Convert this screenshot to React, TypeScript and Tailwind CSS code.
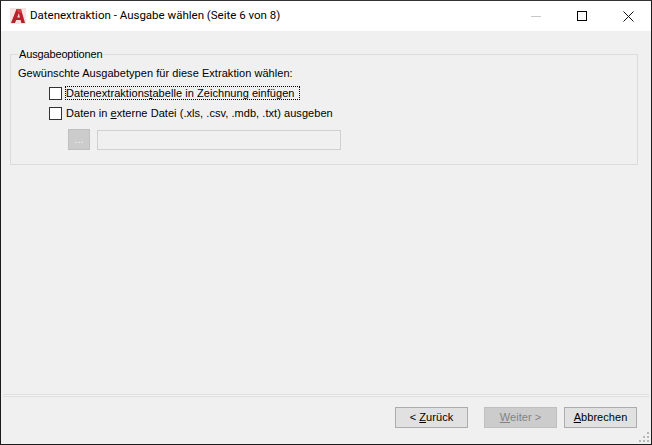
import type { ReactNode } from 'react';

function Check({ label, focused }: { label: ReactNode; focused?: boolean }) {
    return (
        <div className="flex items-center h-[20px]">
            <div className="w-[13px] h-[13px] border border-[#333333] bg-white" />
            <div className={`ml-[3px] pr-[4px] h-[14px] leading-[12px] border border-dotted ${focused ? 'border-black' : 'border-transparent'}`}>{label}</div>
        </div>
    );
}

function WizButton({ children, disabled, className }: { children: ReactNode; disabled?: boolean; className?: string }) {
    return (
        <div className={`h-[21px] flex items-center justify-center border ${disabled ? 'bg-[#cccccc] border-[#bfbfbf] text-[#838383]' : 'bg-[#e1e1e1] border-[#adadad]'} ${className ?? ''}`}>
            <span>{children}</span>
        </div>
    );
}

export default function App() {
    return (
        <div className="w-[652px] h-[445px] flex flex-col bg-[#f0f0f0] border border-[#1c1c1c] border-t-[#333333] text-[11px] tracking-[0.05px] text-black font-['Liberation_Sans',sans-serif] overflow-hidden relative">
            {/* title bar */}
            <div className="h-[30px] bg-white flex items-center shrink-0">
                <svg className="ml-[9px] w-[16px] h-[16px]" viewBox="0 0 16 16">
                    <rect x="0" y="0" width="16" height="16" fill="#f7e4e2" />
                    <path d="M1 15 L6.5 1 H11 L15 15 H11.3 L10.6 12 H6.2 L5 15 Z" fill="#b5222b" />
                    <path d="M7.2 9.4 H9.9 L8.9 5 Z" fill="#f3d4d4" />
                    <path d="M6.5 1 H11 L12 5 L8 4 Z" fill="#d4434a" />
                </svg>
                <div className="ml-[4px] font-['Roboto',sans-serif] text-[11.5px] tracking-normal">Datenextraktion - Ausgabe wählen (Seite 6 von 8)</div>
                <div className="ml-auto flex items-center">
                    <div className="w-[10px] h-px bg-[#c8c8c8] mr-[36px]" />
                    <div className="w-[10px] h-[10px] border border-black mr-[36px]" />
                    <svg className="w-[11px] h-[11px] mr-[17px]" viewBox="0 0 11 11">
                        <path d="M0.5 0.5 L10.5 10.5 M10.5 0.5 L0.5 10.5" stroke="#111111" strokeWidth="1" fill="none" />
                    </svg>
                </div>
            </div>

            {/* body */}
            <div className="flex-1 flex flex-col min-h-0">
                <fieldset className="mt-[18px] ml-[9px] mr-[13px] h-[116px] border border-[#dcdcdc] pl-[7px]">
                    <legend className="px-px h-[10px] leading-[11px] tracking-[-0.15px]">Ausgabeoptionen</legend>
                    <div className="mt-[7px] leading-[14px]">Gewünschte Ausgabetypen für diese Extraktion wählen:</div>
                    <div className="ml-[31px] mt-[3px] flex flex-col">
                        <Check focused label={<>Datenextraktions<u>t</u>abelle in Zeichnung einfügen</>} />
                        <Check label={<>Daten in <u>e</u>xterne Datei (.xls, .csv, .mdb, .txt) ausgeben</>} />
                        <div className="flex items-end ml-[19px] mt-[6px]">
                            <div className="w-[22px] h-[21px] bg-[#cccccc] border border-[#bfbfbf] text-[#f0f0f0] flex items-center justify-center">...</div>
                            <div className="ml-[7px] w-[244px] h-[20px] border border-[#d0d0d0] bg-[#f0f0f0]" />
                        </div>
                    </div>
                </fieldset>

                {/* footer */}
                <div className="mt-auto">
                    <div className="mx-[2px] h-[3px] border-y border-[#dfdfdf] bg-[#f4f4f4]" />
                    <div className="h-[47px] flex items-start pt-[10px] pr-[14px] justify-end">
                        <WizButton className="w-[73px]">&lt; <u>Z</u>urück</WizButton>
                        <WizButton disabled className="w-[73px] ml-[16px]"><u>W</u>eiter &gt;</WizButton>
                        <WizButton className="w-[73px] ml-[7px]"><u>A</u>bbrechen</WizButton>
                    </div>
                </div>
            </div>

            {/* resize grip */}
            <svg className="absolute right-[1px] bottom-[1px] w-[11px] h-[11px]" viewBox="0 0 11 11" fill="#b8b8b8">
                <rect x="8" y="0" width="2" height="2" />
                <rect x="4" y="4" width="2" height="2" />
                <rect x="8" y="4" width="2" height="2" />
                <rect x="0" y="8" width="2" height="2" />
                <rect x="4" y="8" width="2" height="2" />
                <rect x="8" y="8" width="2" height="2" />
            </svg>
        </div>
    );
}
